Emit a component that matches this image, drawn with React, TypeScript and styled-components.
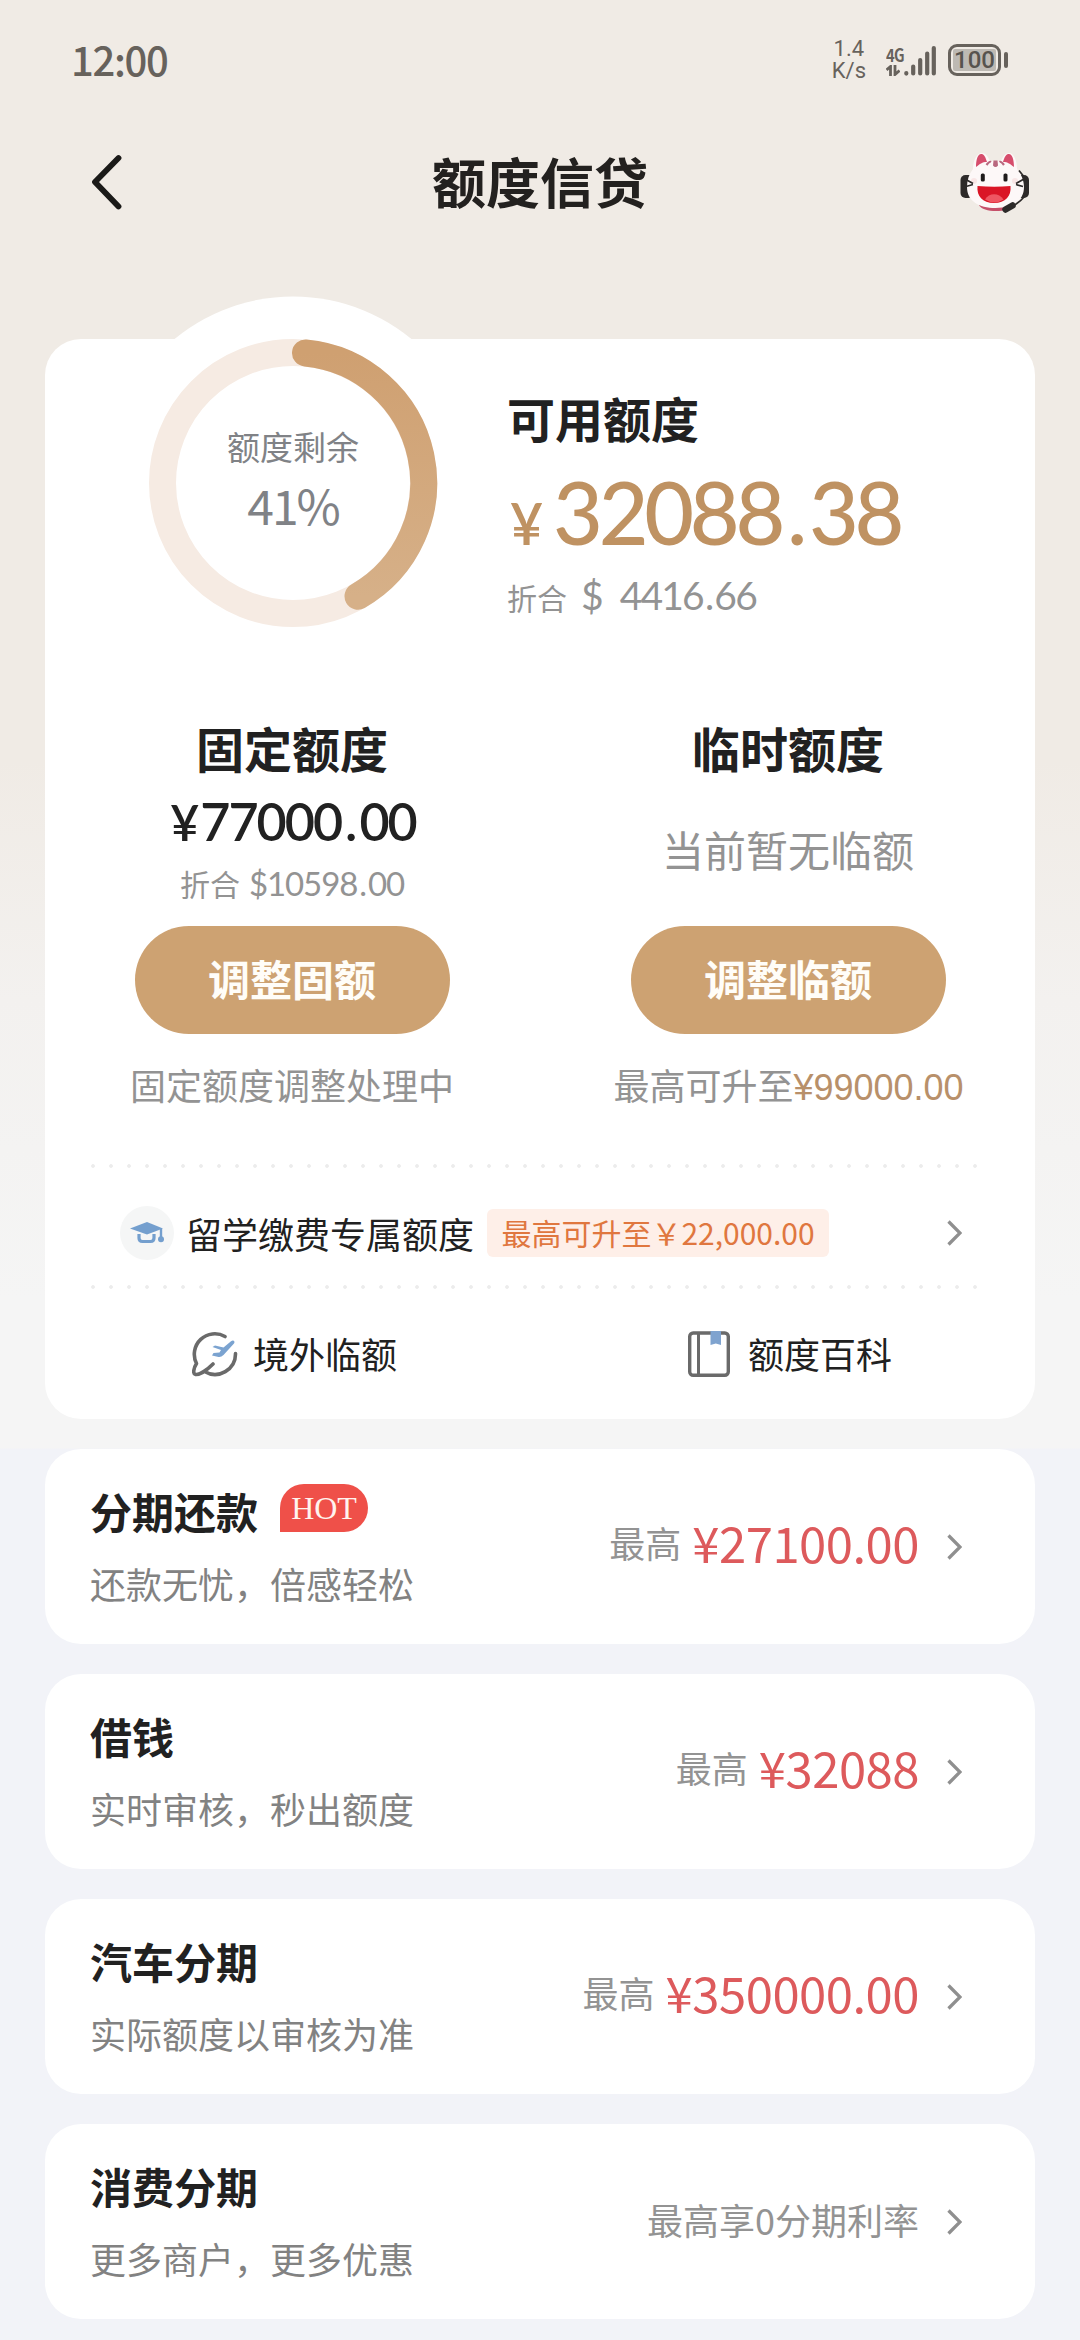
import React from 'react';
import styled, { createGlobalStyle } from 'styled-components';

const cjk = `"Noto Sans CJK SC", sans-serif`;
const geo = `Lato, "Noto Sans CJK SC", sans-serif`;

const Global = createGlobalStyle`
  * { box-sizing: border-box; margin: 0; padding: 0; }
  body { margin: 0; background: #f2f3f8; font-family: ${cjk}; color: #212121; }
  svg { display: block; flex: none; }
`;

const Screen = styled.div`
  width: 1080px;
  height: 2340px;
  overflow: hidden;
  background: linear-gradient(#f0ebe5 0, #f0ebe5 760px, #f3f1ef 1000px, #f5f5f5 1300px, #f5f5f5 1448px, #f2f3f8 1449px);
`;

const Text = styled.span<{ $size: number; $lh: number; $color?: string; $weight?: number; $track?: number; $font?: string; $gap?: number }>`
  display: block;
  white-space: pre;
  font-family: ${(p) => p.$font ?? cjk};
  font-size: ${(p) => p.$size}px;
  line-height: ${(p) => p.$lh}px;
  color: ${(p) => p.$color ?? '#212121'};
  font-weight: ${(p) => p.$weight ?? 400};
  letter-spacing: ${(p) => p.$track ?? 0}px;
  margin-left: ${(p) => p.$gap ?? 0}px;
`;

const StatusBar = styled.div`
  height: 120px;
  display: flex;
  align-items: center;
  justify-content: space-between;
  padding: 0 72px 0 71px;
`;

const Clock = styled.div`
  padding-bottom: 3px;
`;

const StatusIcons = styled.div`
  display: flex;
  align-items: center;
`;

const Speed = styled.div`
  margin-right: 20px;
  text-align: center;
`;

const Network = styled.div`
  display: flex;
  align-items: flex-end;
  gap: 3px;
  margin-right: 12px;
`;

const NetColumn = styled.div`
  display: flex;
  flex-direction: column;
  gap: 3px;
  width: 15px;
`;

const Condensed = styled.div`
  transform: scaleX(0.82);
  transform-origin: left;
`;

const Battery = styled.div`
  display: flex;
  align-items: center;
  gap: 3px;
`;

const BatteryShell = styled.div`
  width: 53px;
  height: 32px;
  border: 3px solid #67625c;
  border-radius: 9px;
  padding: 2px;
`;

const BatteryLevel = styled.div`
  height: 22px;
  border-radius: 2px;
  background: #bdb9b3;
  display: flex;
  align-items: center;
  justify-content: center;
`;

const BatteryTip = styled.div`
  width: 4px;
  height: 16px;
  border-radius: 2px;
  background: #67625c;
`;

const NavBar = styled.header`
  height: 128px;
  display: grid;
  grid-template-columns: 180px 1fr 180px;
  justify-items: center;
  padding-top: 24px;
`;

const BackSlot = styled.div`
  justify-self: start;
  padding: 10px 0 0 87px;
`;

const MascotSlot = styled.div`
  justify-self: end;
  padding: 8px 49px 0 0;
`;

const LimitCard = styled.section`
  position: relative;
  margin: 91px 45px 30px;
  height: 1080px;
  border-radius: 36px;
  background: #fff;
  display: flex;
  flex-direction: column;
`;

const Overview = styled.div`
  display: flex;
  height: 369px;
`;

const Gauge = styled.div`
  position: absolute;
  left: 61px;
  top: -43px;
`;

const GaugeLabel = styled.div`
  position: absolute;
  inset: 0;
  display: flex;
  flex-direction: column;
  align-items: center;
  padding-top: 124px;
`;

const Available = styled.div`
  margin-left: 462px;
  padding-top: 46px;
`;

const AmountRow = styled.div`
  display: flex;
  align-items: baseline;
  height: 104px;
  margin: 11px 0 3px;
`;

const Dot = styled.span<{ $pad: number }>`
  padding: 0 ${(p) => p.$pad}px;
`;

const Baseline = styled.div`
  display: flex;
  align-items: baseline;
`;

const Columns = styled.div`
  display: grid;
  grid-template-columns: 494px 496px;
  height: 456px;
`;

const Column = styled.div<{ $shift: number }>`
  display: flex;
  flex-direction: column;
  align-items: center;
  padding-left: ${(p) => p.$shift}px;
`;

const AmountSlot = styled.div`
  height: 140px;
  display: flex;
  flex-direction: column;
  align-items: center;
`;

const PillButton = styled.button`
  width: 315px;
  height: 108px;
  flex: none;
  border: 0;
  border-radius: 54px;
  background: #cda272;
  display: flex;
  align-items: center;
  justify-content: center;
  padding-bottom: 4px;
  margin-bottom: 25px;
`;

const Dotted = styled.div`
  height: 4px;
  margin: 0 51px 0 39px;
  background: radial-gradient(circle at 9px 2px, #ececec 1.5px, transparent 2.2px) 0 0 / 18px 4px repeat-x;
`;

const StudyRow = styled.div`
  display: flex;
  align-items: center;
  height: 117px;
  padding: 12px 73px 0 75px;
`;

const CapBadge = styled.div`
  width: 54px;
  height: 54px;
  border-radius: 50%;
  background: #f5f6f6;
  display: flex;
  align-items: center;
  justify-content: center;
  margin-right: 12px;
`;

const Tag = styled.div`
  height: 48px;
  width: 342px;
  margin: 0 auto 0 13px;
  border-radius: 6px;
  background: #feefe8;
  display: flex;
  justify-content: center;
`;

const LinkRow = styled.div`
  display: grid;
  grid-template-columns: 496px 494px;
  height: 130px;
`;

const IconLink = styled.div<{ $left: number; $gap: number }>`
  display: flex;
  align-items: center;
  gap: ${(p) => p.$gap}px;
  padding-left: ${(p) => p.$left}px;
`;

const LinkLabel = styled.div`
  padding-bottom: 3px;
`;

const Products = styled.div`
  display: flex;
  flex-direction: column;
  gap: 30px;
  margin: 0 45px;
`;

const ProductCard = styled.section`
  height: 195px;
  flex: none;
  border-radius: 36px;
  background: #fff;
  display: flex;
  justify-content: space-between;
  padding: 0 73px 0 45px;
`;

const ProductInfo = styled.div`
  padding-top: 32px;
`;

const TitleRow = styled.div`
  display: flex;
  gap: 22px;
  height: 66px;
`;

const HotBadge = styled.div`
  width: 88px;
  height: 48px;
  border-radius: 24px 24px 24px 0;
  background: #ef5049;
  display: flex;
  justify-content: center;
  margin-top: 3px;
`;

const ProductValue = styled.div`
  display: flex;
  align-items: center;
  gap: 28px;
`;

const ValueText = styled.div<{ $lift: number }>`
  display: flex;
  align-items: center;
  gap: 11px;
  padding-bottom: ${(p) => p.$lift}px;
`;

const Chevron = () => (
  <svg width="15" height="26" viewBox="0 0 15 26" fill="none" stroke="#8f8f8f" strokeWidth="3.3">
    <path d="M1.5 1.5 13 13 1.5 24.5" />
  </svg>
);

const BackIcon = () => (
  <svg width="40" height="56" viewBox="0 0 40 56" fill="none" stroke="#1b1a18" strokeWidth="5.8" strokeLinecap="round" strokeLinejoin="round">
    <path d="M31.500 4 8 28 31.500 52.500" />
  </svg>
);

const Mascot = () => (
  <svg width="72" height="64" viewBox="0 0 72 64">
    <rect x="1.500" y="23" width="13" height="23" rx="5" fill="#2d2a29" />
    <rect x="57" y="23" width="13" height="23" rx="5" fill="#2d2a29" />
    <path d="M20 53h33c-2 4-8 6-16 6s-15-2-17-6z" fill="#c6506a" />
    <path d="M14 17C14 8 18 1 23 1c4 0 6 4 8 8h11c2-4 4-8 8-8 5 0 8 8 8 16 4 5 7 11 7 18 0 14-12 21-28.500 21S8 49 8 35c0-7 2-13 6-18z" fill="#fdf8f8" />
    <path d="M17 15c0-8 2-14 6-13 3 1 4 5 5 8-5 0-7 2-11 5z" fill="#d64d6c" />
    <path d="M55 15c0-8-2-14-6-13-3 1-4 5-5 8 5 0 7 2 11 5z" fill="#d64d6c" />
    <path d="M34.500 8.500h4l.5 5q-2.500 3-5 0z" fill="#b9687f" />
    <path d="M27.500 13q3-4 4.500-3M45 13q-3-4-4.500-3" stroke="#b9687f" strokeWidth="2.200" fill="none" />
    <circle cx="15" cy="29" r="3" fill="#f9e6e6" />
    <circle cx="56" cy="29" r="3" fill="#f9e6e6" />
    <rect x="21.800" y="21.500" width="4" height="8" rx="1.600" fill="#1f1b1b" />
    <rect x="44.500" y="21.500" width="4" height="8" rx="1.600" fill="#1f1b1b" />
    <path d="M18.500 34q17 1.500 33 0c1 10-5 17-16.500 17S17.500 44 18.500 34z" fill="#da1526" />
    <path d="M26 47.500c4-7 14-7 18.500 0q-9 6-18.500 0z" fill="#ef5662" />
    <path d="M6 27l8 4.500M7 34.500l7-2M65 27l-8 4.500M64 34.500l-7-2M60 18.500l4 5M66 44Q61 50 54 54" stroke="#2d2a29" strokeWidth="1.700" fill="none" />
    <path d="M46.500 57.500l7-4" stroke="#2d2a29" strokeWidth="6.500" strokeLinecap="round" />
  </svg>
);

const SignalIcon = () => (
  <svg width="32" height="31" viewBox="0 0 32 31" fill="none" stroke="#67625c" strokeWidth="4.200" strokeLinecap="round">
    <path d="M2.300 28v.6M9.200 21.500v7M16.200 15v13.500M23.200 8.500v20M29.800 3v25.500" />
  </svg>
);

const DataArrows = () => (
  <svg width="14" height="11" viewBox="0 0 14 11" fill="none" stroke="#67625c" strokeWidth="2.800">
    <path d="M0.500 4.800 4.500 1.500V11M9 0V9.500l4.500-4" />
  </svg>
);

const GaugeRing = () => (
  <svg width="374" height="374" viewBox="-187 -187 374 374" fill="none">
    <defs>
      <linearGradient id="arc" x1="0" y1="0" x2="0" y2="1">
        <stop offset="0" stopColor="#cfa071" />
        <stop offset="1" stopColor="#d6b088" />
      </linearGradient>
    </defs>
    <circle r="186.500" fill="#fff" />
    <circle r="130.500" stroke="#f6ebe3" strokeWidth="27" />
    <path d="M12.500 -130A130.500 130.500 0 0 1 65 113.200" stroke="url(#arc)" strokeWidth="27" strokeLinecap="round" />
  </svg>
);

const CapIcon = () => (
  <svg width="34" height="22" viewBox="0 0 34 22">
    <path d="M0 6.500 17 0 33 6.500 17 12.500z" fill="#749fce" />
    <path d="M9 12v4q0 3.500 3.500 3.500h8q3.500 0 3.500-3.500V12" fill="none" stroke="#749fce" strokeWidth="3.200" />
    <path d="M31 7v9" fill="none" stroke="#749fce" strokeWidth="2.400" />
    <circle cx="31" cy="17.300" r="3" fill="#749fce" />
  </svg>
);

const GlobePlaneIcon = () => (
  <svg width="46" height="46" viewBox="0 0 46 46" fill="none">
    <path d="M33 5.500A20.500 20.500 0 0 0 4.500 32.500C1 38 1 43 3.500 43.500 8 44 16 38 21 33M12.500 40.500A20.500 20.500 0 0 0 43.500 22.500" stroke="#6a6a6a" strokeWidth="3.600" strokeLinecap="round" strokeLinejoin="round" />
    <path d="M20.500 16l2.500-1.500 8.500 2 7.500-6.300c2.500-1.800 4.500.3 3 2.400L31.500 24q-2.500 2.500-5 2L20 24.500l1.500-2.500 6-.4 1.500-2.600z" fill="#7ba3d0" />
  </svg>
);

const BookIcon = () => (
  <svg width="42" height="46" viewBox="0 0 42 46" fill="none">
    <rect x="1.700" y="2" width="38.600" height="42.300" rx="3.500" stroke="#6a6a6a" strokeWidth="3.400" />
    <path d="M10.500 2v42" stroke="#6a6a6a" strokeWidth="3" />
    <path d="M22.500 0H33v14l-5.200-1.500-5.300 1.500z" fill="#7fa3cf" />
  </svg>
);

const grey = '#939393';

type Product = { title: string; sub: string; hot?: boolean; amount?: string; note?: string };

const products: Product[] = [
  { title: '分期还款', sub: '还款无忧，倍感轻松', hot: true, amount: '¥27100.00' },
  { title: '借钱', sub: '实时审核，秒出额度', amount: '¥32088' },
  { title: '汽车分期', sub: '实际额度以审核为准', amount: '¥350000.00' },
  { title: '消费分期', sub: '更多商户，更多优惠', note: '最高享0分期利率' },
];

export default function App() {
  return (
    <Screen>
      <Global />
      <StatusBar>
        <Clock>
          <Text $size={40} $lh={50} $color="#67625c" $weight={500} $track={-1.3}>12:00</Text>
        </Clock>
        <StatusIcons>
          <Speed>
            <Text $size={22} $lh={22} $color="#67625c" $font="Roboto, sans-serif">1.4</Text>
            <Text $size={22} $lh={22} $color="#67625c" $font="Roboto, sans-serif">K/s</Text>
          </Speed>
          <Network>
            <NetColumn>
              <Condensed>
                <Text $size={18} $lh={16} $color="#67625c" $weight={700} $track={-1}>4G</Text>
              </Condensed>
              <DataArrows />
            </NetColumn>
            <SignalIcon />
          </Network>
          <Battery>
            <BatteryShell>
              <BatteryLevel>
                <Text $size={24} $lh={22} $color="#57534e" $weight={500} $font="Roboto, sans-serif">100</Text>
              </BatteryLevel>
            </BatteryShell>
            <BatteryTip />
          </Battery>
        </StatusIcons>
      </StatusBar>

      <NavBar>
        <BackSlot><BackIcon /></BackSlot>
        <Text $size={54} $lh={74} $weight={700} $color="#23211f">额度信贷</Text>
        <MascotSlot><Mascot /></MascotSlot>
      </NavBar>

      <LimitCard>
        <Gauge>
          <GaugeRing />
          <GaugeLabel>
            <Text $size={33} $lh={52} $color="#808286">额度剩余</Text>
            <Text $size={48} $lh={65} $color="#808286" $track={-2}>41%</Text>
          </GaugeLabel>
        </Gauge>
        <Overview>
          <Available>
            <Text $size={48} $lh={64} $weight={700}>可用额度</Text>
            <AmountRow>
              <Text $size={57} $lh={104} $color="#bf9262" $weight={600} $font={geo} $gap={3} $track={-2}>¥</Text>
              <Text $size={86} $lh={104} $color="#bf9262" $weight={500} $font={geo} $track={-4.3} $gap={12}>32088<Dot $pad={6}>.</Dot>38</Text>
            </AmountRow>
            <Baseline>
              <Text $size={30} $lh={56} $color={grey}>折合</Text>
              <Text $size={39} $lh={56} $color={grey} $font={geo} $gap={14}>$</Text>
              <Text $size={39} $lh={56} $color={grey} $font={geo} $gap={16} $track={-1.8}>4416<Dot $pad={2}>.</Dot>66</Text>
            </Baseline>
          </Available>
        </Overview>

        <Columns>
          <Column $shift={0}>
            <Text $size={48} $lh={78} $weight={700}>固定额度</Text>
            <AmountSlot>
              <Baseline>
                <Text $size={50} $lh={70} $weight={600} $font={geo} $gap={2}>¥</Text>
                <Text $size={52} $lh={70} $weight={600} $font={geo} $track={-2} $gap={1}>77000<Dot $pad={4}>.</Dot>00</Text>
              </Baseline>
              <Baseline>
                <Text $size={30} $lh={52} $color={grey}>折合</Text>
                <Text $size={33} $lh={52} $color={grey} $font={geo} $gap={9} $track={-1.1}>$10598<Dot $pad={2}>.</Dot>00</Text>
              </Baseline>
            </AmountSlot>
            <PillButton><Text $size={42} $lh={60} $weight={700} $color="#fffdf8">调整固额</Text></PillButton>
            <Text $size={36} $lh={50} $color={grey}>固定额度调整处理中</Text>
          </Column>
          <Column $shift={2}>
            <Text $size={48} $lh={78} $weight={700}>临时额度</Text>
            <AmountSlot>
              <Text $size={42} $lh={126} $color={grey}>当前暂无临额</Text>
            </AmountSlot>
            <PillButton><Text $size={42} $lh={60} $weight={700} $color="#fffdf8">调整临额</Text></PillButton>
            <Baseline>
              <Text $size={36} $lh={50} $color={grey} $gap={1}>最高可升至</Text>
              <Text $size={36} $lh={50} $color="#b8906a" $font='"Liberation Sans", sans-serif'>¥99000.00</Text>
            </Baseline>
          </Column>
        </Columns>

        <Dotted />
        <StudyRow>
          <CapBadge><CapIcon /></CapBadge>
          <Text $size={36} $lh={54}>留学缴费专属额度</Text>
          <Tag>
            <Text $size={30} $lh={46} $color="#e0773f">最高可升至￥22,000.00</Text>
          </Tag>
          <Chevron />
        </StudyRow>
        <Dotted />
        <LinkRow>
          <IconLink $left={147} $gap={15}>
            <GlobePlaneIcon />
            <LinkLabel><Text $size={36} $lh={54}>境外临额</Text></LinkLabel>
          </IconLink>
          <IconLink $left={147} $gap={18}>
            <BookIcon />
            <LinkLabel><Text $size={36} $lh={54}>额度百科</Text></LinkLabel>
          </IconLink>
        </LinkRow>
      </LimitCard>

      <Products>
        {products.map((p) => (
          <ProductCard key={p.title}>
            <ProductInfo>
              <TitleRow>
                <Text $size={42} $lh={60} $weight={700}>{p.title}</Text>
                {p.hot && (
                  <HotBadge>
                    <Text $size={32} $lh={48} $color="#fff3ee" $font='"Liberation Serif", serif'>HOT</Text>
                  </HotBadge>
                )}
              </TitleRow>
              <Text $size={36} $lh={72} $color="#828282">{p.sub}</Text>
            </ProductInfo>
            <ProductValue>
              {p.amount ? (
                <ValueText $lift={9}>
                  <Text $size={36} $lh={54} $color={grey}>最高</Text>
                  <Text $size={49} $lh={70} $color="#dd5a5c" $track={-0.5}>{p.amount}</Text>
                </ValueText>
              ) : (
                <ValueText $lift={5}>
                  <Text $size={36} $lh={54} $color={grey}>{p.note}</Text>
                </ValueText>
              )}
              <Chevron />
            </ProductValue>
          </ProductCard>
        ))}
      </Products>
    </Screen>
  );
}
